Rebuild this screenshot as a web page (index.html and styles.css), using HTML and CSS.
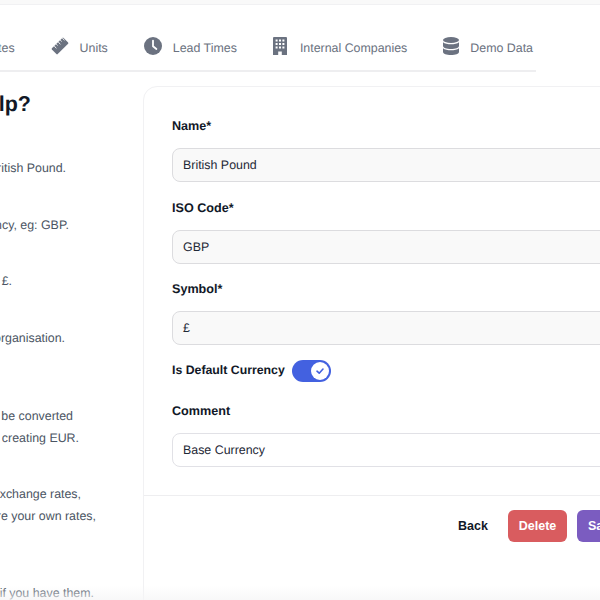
FILE: index.html
```html
<!DOCTYPE html>
<html lang="en">
<head>
<meta charset="utf-8">
<title>Edit Currency</title>
<link rel="stylesheet" href="styles.css">
</head>
<body>
<div class="page">
  <div class="topbar"></div>
  <nav class="tabs">
    <a class="tab"><span>Exchange Rates</span></a>
    <a class="tab">
      <svg class="icon" width="18" height="18" viewBox="0 0 18 18"><path d="M12.6 0.9 17.1 5.4a1 1 0 0 1 0 1.3L6.7 17.1a1 1 0 0 1-1.3 0L0.9 12.6a1 1 0 0 1 0-1.3L11.3 0.9a1 1 0 0 1 1.3 0Z" fill="#6b7280"/><path d="M3.2 9 5.4 11.2M5.2 7 6.6 8.4M7.2 5 9.4 7.2M9.2 3 10.6 4.4M11.2 1 13.4 3.2" stroke="#fff" stroke-width="1" fill="none"/></svg>
      <span>Units</span>
    </a>
    <a class="tab">
      <svg class="icon" width="18" height="18" viewBox="0 0 18 18"><circle cx="9" cy="9" r="9" fill="#6b7280"/><path d="M9 3.6V9.3L12.4 12" stroke="#fff" stroke-width="1.8" stroke-linecap="round" stroke-linejoin="round" fill="none"/></svg>
      <span>Lead Times</span>
    </a>
    <a class="tab tab-wide">
      <svg class="icon" width="14" height="18" viewBox="0 0 14 18"><path d="M1 0H13a1 1 0 0 1 1 1V18H8.8V14.6H5.2V18H0V1a1 1 0 0 1 1-1Z" fill="#6b7280"/><path d="M2.6 2.6h2v2h-2ZM6 2.6h2v2H6ZM9.4 2.6h2v2h-2ZM2.6 6h2v2h-2ZM6 6h2v2H6ZM9.4 6h2v2h-2ZM2.6 9.4h2v2h-2ZM6 9.4h2v2H6ZM9.4 9.4h2v2h-2Z" fill="#fff"/></svg>
      <span>Internal Companies</span>
    </a>
    <a class="tab">
      <svg class="icon" width="16" height="18" viewBox="0 0 16 18"><ellipse cx="8" cy="3" rx="8" ry="3" fill="#6b7280"/><path d="M0 5.2C1.6 6.8 4.8 7.2 8 7.2S14.4 6.8 16 5.2V9C16 10.7 12.4 12 8 12S0 10.7 0 9Z" fill="#6b7280"/><path d="M0 11.2C1.6 12.8 4.8 13.2 8 13.2S14.4 12.8 16 11.2V15C16 16.7 12.4 18 8 18S0 16.7 0 15Z" fill="#6b7280"/></svg>
      <span>Demo Data</span>
    </a>
  </nav>
  <main class="content">
    <aside class="help">
      <h2 class="help-title">Need Some Help?</h2>
      <p class="help-line l1">Enter the full name of the currency, eg: British Pound.</p>
      <p class="help-line l2">Enter the ISO code for this currency, eg: GBP.</p>
      <p class="help-line l3">Enter the symbol of the currency, eg: £.</p>
      <p class="help-line l4">The base currency used across your organisation.</p>
      <p class="help-line l5">All other currencies will then need to be converted</p>
      <p class="help-line l6">to this one, for example when you are creating EUR.</p>
      <p class="help-line l7">We update this each day with live exchange rates,</p>
      <p class="help-line l8">but you may prefer to enter and share your own rates,</p>
      <p class="help-line l9">Add your own comment here as well if you have them.</p>
    </aside>
    <section class="card">
      <form class="form">
        <label class="label">Name*</label>
        <div class="input">British Pound</div>
        <label class="label">ISO Code*</label>
        <div class="input">GBP</div>
        <label class="label">Symbol*</label>
        <div class="input">£</div>
        <div class="toggle-row">
          <label class="label-inline">Is Default Currency</label>
          <span class="toggle"><span class="knob"><svg width="10" height="10" viewBox="0 0 10 10"><path d="M2 5.2 4.2 7.2 8 3" stroke="#4361e0" stroke-width="1.6" fill="none" stroke-linecap="round" stroke-linejoin="round"/></svg></span></span>
        </div>
        <label class="label">Comment</label>
        <div class="input input-white">Base Currency</div>
      </form>
      <div class="actions">
        <button class="btn btn-back">Back</button>
        <button class="btn btn-delete">Delete</button>
        <button class="btn btn-save">Save</button>
      </div>
    </section>
  </main>
  <div class="fade"></div>
</div>
</body>
</html>
```
FILE: styles.css
```css
* { box-sizing: border-box; }
html, body { margin: 0; padding: 0; background: #fff; }
body { font-family: "Liberation Sans", Arial, sans-serif; color: #111827; text-rendering: geometricPrecision; }
.page { position: relative; width: 600px; height: 600px; overflow: hidden; background: #fff; }
.topbar { height: 5px; background: #f9f9f9; border-bottom: 1px solid #f1f1f3; }
.tabs {
  display: flex; align-items: center; justify-content: flex-end; gap: 36px;
  width: 536px; height: 67px; padding: 32px 3px 16px 0;
  border-bottom: 2px solid #eeeef0;
  white-space: nowrap;
  font-size: 12.4px; color: #6b7280;
}
.tab { display: flex; align-items: center; gap: 11px; flex: none; }
.tab span { padding-top: 4px; }
.tab-wide { gap: 13px; }
.icon { display: block; flex: none; }
.content { display: flex; align-items: flex-start; margin-top: 14px; margin-left: -260px; gap: 13px; }
.help { width: 390px; flex: none; color: #4b5563; font-size: 12.4px; }
.help-title { margin: 5px 0 41px; font-size: 21.5px; line-height: 26px; font-weight: 700; color: #111827; text-align: right; padding-right: 99px; }
.help-line { margin: 0; line-height: 21.5px; white-space: nowrap; text-align: right; }
.l1 { padding-right: 64px; }
.l2 { margin-top: 35px; padding-right: 61px; }
.l3 { margin-top: 35px; padding-right: 118px; }
.l4 { margin-top: 35px; padding-right: 65px; }
.l5 { margin-top: 56.5px; padding-right: 57px; }
.l6 { margin-top: 0.5px; padding-right: 51px; }
.l7 { margin-top: 34.5px; padding-right: 49px; }
.l8 { margin-top: 0.5px; padding-right: 34px; }
.l9 { margin-top: 56px; padding-right: 36px; }
.card { width: 560px; height: 540px; flex: none; border: 1px solid #f1f1f3; border-radius: 14px; background: #fff; }
.form { display: flex; flex-direction: column; padding: 29px 28px 0 28px; height: 409px; border-bottom: 1px solid #eeeef0; }
.label { display: block; font-size: 12.6px; font-weight: 700; line-height: 20px; color: #111827; margin-bottom: 12px; }
.input {
  flex: none; height: 34px; padding: 0 10px; display: flex; align-items: center;
  background: #f9f9f9; border: 1.5px solid #dcdcdf; border-radius: 8px;
  font-size: 12.4px; color: #1f2937; margin-bottom: 15.5px;
}
.input-white { background: #fff; border-color: #e1e1e6; margin-bottom: 0; }
.toggle-row { flex: none; display: flex; align-items: center; gap: 7px; height: 22px; margin-top: -0.5px; margin-bottom: 19px; }
.label-inline { font-size: 12.3px; font-weight: 700; color: #111827; margin-bottom: 2px; }
.toggle { display: flex; align-items: center; justify-content: flex-end; width: 39px; height: 22px; border-radius: 11px; background: #4361e0; padding: 0 2px; }
.knob { display: flex; align-items: center; justify-content: center; width: 18px; height: 18px; border-radius: 50%; background: #fff; }
.actions { display: flex; align-items: center; gap: 10px; padding: 14px 0 0 314px; }
.btn { flex: none; height: 32px; border: 0; border-radius: 6px; font-family: inherit; font-size: 12.5px; font-weight: 700; color: #fff; padding: 0 11px; }
.btn-back { width: 30px; padding: 0; margin-right: 10px; background: none; color: #111827; }
.btn-delete { width: 59px; padding: 0; background: #d95c5f; }
.btn-save { background: #7b5cc0; }
.fade { position: absolute; left: 0; right: 0; bottom: 0; height: 14px; background: linear-gradient(to bottom, rgba(245,245,246,0), rgba(245,245,246,.75)); }
```
